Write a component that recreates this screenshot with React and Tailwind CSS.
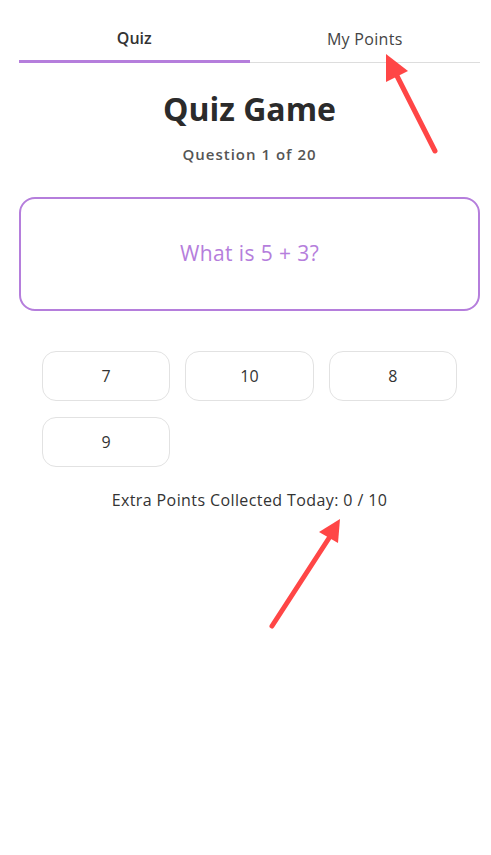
// Quiz game screen
const options = ['7', '10', '8', '9'];

export default function App() {
  return (
    <div className="relative min-h-[855px] bg-white pl-[19px] pr-[11px] text-[#333]" style={{ fontFamily: '"Open Sans", "Noto Sans", sans-serif' }}>
      {/* Tabs */}
      <div className="flex">
        <button className="flex-1 pt-[27px] pb-[11px] border-b-[3px] border-[#b57edc] text-[16px] leading-[22px] font-semibold text-[#333]">
          Quiz
        </button>
        <button className="flex-1 pt-[27px] pb-[12px] border-b border-[#dddddd] text-[16px] leading-[22px] tracking-[0.3px] text-[#444] self-end">
          My Points
        </button>
      </div>

      <h1 className="mt-[27px] text-center text-[32px] leading-[38px] font-bold text-[#2b2b2b]">Quiz Game</h1>
      <p className="mt-[16px] text-center text-[15px] leading-[20px] font-semibold tracking-[1px] text-[#555]">Question 1 of 20</p>

      {/* Question card */}
      <div className="mt-[33px] h-[114px] rounded-[16px] border-2 border-[#b57edc] flex items-center justify-center">
        <span className="text-[21px] tracking-[0.4px] text-[#b57edc]">What is 5 + 3?</span>
      </div>

      {/* Answers */}
      <div className="mt-[40px] mx-[23px] grid grid-cols-3 gap-x-[15px] gap-y-[16px]">
        {options.map((o) => (
          <button
            key={o}
            className="h-[50px] rounded-[14px] border border-[#e2e2e2] bg-white text-[16px] text-[#333]"
          >
            {o}
          </button>
        ))}
      </div>

      <p className="mt-[21px] text-center text-[16px] leading-[24px] tracking-[0.4px] text-[#333]">Extra Points Collected Today: 0 / 10</p>

      {/* Annotation arrows */}
      <svg className="absolute inset-0 pointer-events-none" width="491" height="855">
        <line x1="435" y1="151" x2="396" y2="74" stroke="#ff4646" strokeWidth="5" strokeLinecap="round" />
        <polygon points="386,54 386,82 408,71" fill="#ff4646" />
        <line x1="272" y1="626" x2="331" y2="535" stroke="#ff4646" strokeWidth="5" strokeLinecap="round" />
        <polygon points="340,519 319,532 338,543" fill="#ff4646" />
      </svg>
    </div>
  );
}
